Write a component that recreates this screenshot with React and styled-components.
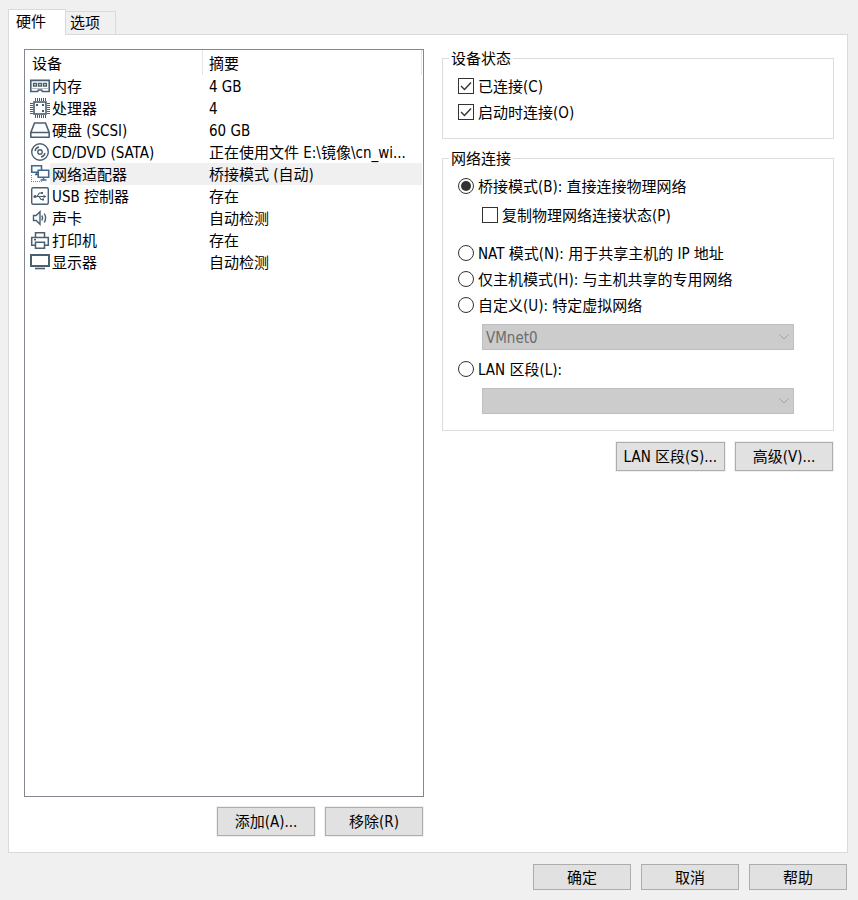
import React, { useState } from "react";
import styled, { createGlobalStyle, css } from "styled-components";

const GlobalStyle = createGlobalStyle`
  *, *::before, *::after { box-sizing: border-box; }
  body {
    margin: 0;
    background: #f0f0f0;
    color: #000;
    font: 15px/20px Tahoma, "DejaVu Sans Condensed", "Noto Sans CJK SC", sans-serif;
  }
  button, select, input { font: inherit; color: inherit; margin: 0; }
`;

const Dialog = styled.main`
  min-height: 100vh;
  display: flex;
  flex-direction: column;
  padding: 9px 10px 10px 8px;
`;

const TabList = styled.div`
  display: flex;
  align-items: flex-end;
`;

const Tab = styled.button`
  height: 23px;
  padding: 0 15px 0 4px;
  border: 1px solid #dadada;
  border-width: 1px 1px 0 0;
  background: #f0f0f0;
  ${(p) =>
    p["aria-selected"] &&
    css`
      height: 26px;
      padding: 0 19px 2px 7px;
      border-left-width: 1px;
      background: #fff;
      position: relative;
      margin-bottom: -1px;
    `}
`;

const Panel = styled.section`
  flex: 1;
  display: grid;
  grid-template-columns: minmax(0, 400fr) minmax(0, 392fr);
  gap: 18px;
  padding: 14px 13px 16px 15px;
  background: #fff;
  border: 1px solid #dadada;
`;

const Column = styled.div`
  display: flex;
  flex-direction: column;
`;

const DeviceList = styled.div`
  flex: 1;
  padding-right: 1px;
  border: 1px solid #828790;
`;

const DeviceTable = styled.table`
  width: 100%;
  table-layout: fixed;
  border-collapse: separate;
  border-spacing: 0;
`;

const HeadCell = styled.th`
  height: 25px;
  width: ${(p) => p.$width || "auto"};
  padding: 2px 0 0 ${(p) => (p.$first ? 7 : 6)}px;
  border-right: 1px solid #e5e5e5;
  font-weight: normal;
  text-align: left;
`;

const DeviceRow = styled.tr`
  height: 22px;
  --row: ${(p) => (p["aria-selected"] ? "#f0f0f0" : "#fff")};
`;

const NameCell = styled.td`
  padding: 0 0 0 5px;
`;

const DeviceName = styled.div`
  display: grid;
  grid-template-columns: 20px 1fr;
`;

const DeviceLabel = styled.span`
  padding: 2px 0 0 2px;
  background: var(--row);
`;

const SummaryCell = styled.td`
  padding: 2px 4px 0 6px;
  background: var(--row);
  overflow: hidden;
  white-space: nowrap;
  text-overflow: ellipsis;
`;

const ButtonRow = styled.div`
  display: flex;
  justify-content: flex-end;
  gap: 10px;
  margin-top: ${(p) => p.$top}px;
  padding-right: 1px;
`;

const Button = styled.button`
  min-width: 98px;
  height: 29px;
  padding: 0 7px;
  border: 1px solid #adadad;
  background: #e1e1e1;
  box-shadow: 0 0 0 1px #f0f0f0;
  white-space: nowrap;
  &:hover { border-color: #0078d7; background: #e5f1fb; }
`;

const Footer = styled(ButtonRow)`
  ${Button} { height: 26px; padding-top: 2px; }
`;

const Settings = styled(Column)`
  margin-top: -1px;
  gap: 9px;
`;

const Group = styled.fieldset`
  min-width: 0;
  margin: 0;
  padding: 5px 15px ${(p) => p.$bottom}px;
  border: 1px solid #dcdcdc;
`;

const Legend = styled.legend`
  height: 20px;
  margin-left: -9px;
  padding: 0 2px;
  line-height: 22px;
`;

const Choice = styled.label`
  display: flex;
  align-items: center;
  gap: 4px;
  height: 26px;
  margin-top: ${(p) => p.$top || 0}px;
  margin-left: ${(p) => (p.$nested ? 24 : 0)}px;
  white-space: nowrap;
`;

const ChoiceText = styled.span`
  padding-top: 2px;
`;

const Mark = styled.span`
  display: grid;
  flex: none;
  width: 16px;
  height: 16px;
  > * { grid-area: 1 / 1; }
  svg { visibility: hidden; pointer-events: none; }
  input:checked + svg { visibility: visible; }
`;

const MarkInput = styled.input`
  appearance: none;
  width: 16px;
  height: 16px;
  border: 1px solid #333;
  border-radius: ${(p) => (p.type === "radio" ? "50%" : "0")};
  background: #fff;
`;

const SelectBox = styled.div`
  display: grid;
  align-items: center;
  margin: 6px 24px 0;
  > * { grid-area: 1 / 1; }
  svg { justify-self: end; margin-right: 4px; pointer-events: none; }
`;

const Select = styled.select`
  appearance: none;
  width: 100%;
  height: 26px;
  padding: 2px 24px 0 3px;
  border: 1px solid #bfbfbf;
  border-radius: 0;
  background: #ccc;
  color: #6d6d6d;
  opacity: 1;
`;

const Glyph = styled.svg`
  display: block;
  fill: none;
  stroke: ${(p) => p.$color || "#4a6070"};
  stroke-width: 1.6;
`;

const icons = {
  memory: (
    <>
      <path d="M.8 5.500h18.400v11h-6.700l-1-1.500h-3l-1 1.500H.8z" />
      <path d="M0 4.500h20" stroke="#a4afb7" strokeWidth="1" />
      <path d="M3.500 8.500h3v2.500h-3zM8.500 8.500h3v2.500h-3zM13.500 8.500h3v2.500h-3z" strokeWidth="1.300" />
      <path d="M2 13.500h16" stroke="#b5bec5" strokeWidth="1" />
    </>
  ),
  cpu: (
    <>
      <rect x="4" y="5" width="12" height="12" />
      <path d="M5.500 1v3M7.500 1v3M9.500 1v3M11.500 1v3M13.500 1v3M15.500 1v3M5.500 18v3M7.500 18v3M9.500 18v3M11.500 18v3M13.500 18v3M15.500 18v3M0 6.500h3M0 8.500h3M0 10.500h3M0 12.500h3M0 14.500h3M0 16.500h3M17 6.500h3M17 8.500h3M17 10.500h3M17 12.500h3M17 14.500h3M17 16.500h3" strokeWidth="1" />
      <path d="M6 7h2v2H6zM12 7h2v2h-2zM12 13h2v2h-2z" fill="#4a6070" stroke="none" />
    </>
  ),
  disk: (
    <path d="M4.500 4h11l3.700 9.500v4.700H.8v-4.700zM.8 13.500h18.400" strokeLinejoin="round" />
  ),
  disc: (
    <>
      <circle cx="10" cy="11" r="8.300" strokeWidth="1.400" />
      <circle cx="10" cy="11" r="2.200" strokeWidth="1.400" />
      <path d="M5 10a5 5 0 0 1 4-4M15 12a5 5 0 0 1-4 4" strokeWidth="1.400" />
    </>
  ),
  network: (
    <>
      <path d="M1.700 2.700h9.800v6.600H1.700zM5 11.500h4M6.500 9.300v2.200" />
      <path d="M8.200 7.200h10.500v7H8.200z" fill="#fff" />
      <path d="M13.500 14v2.500M10.500 17h6" />
      <path d="M1.500 12v7M3 18.500h10" strokeDasharray="1 1" strokeWidth="1" stroke="#73869a" />
    </>
  ),
  usb: (
    <>
      <rect x="1.700" y="2.700" width="16.600" height="16.600" rx="1.500" strokeWidth="1.400" />
      <path d="M5 11.500h9.500M7 11.500l2.500-3.500h2M9 11.500l2 3h2" strokeWidth="1.200" />
      <path d="M13.500 9.700l3 1.800-3 1.800zM11 7h2v2h-2zM12 13.500h2v2h-2z" fill="#4a6070" stroke="none" />
      <circle cx="5" cy="11.500" r="1.600" fill="#4a6070" stroke="none" />
    </>
  ),
  sound: (
    <path d="M3.500 8.500h2.700L10 4.700v12.600l-3.800-3.800H3.500zM11.800 8.500q1.600 2.500 0 5M14.200 6.500q2.800 4.500 0 9" strokeWidth="1.400" />
  ),
  printer: (
    <path d="M5.500 8.500V3.700h9v4.800M5.500 16.200H1.700V8.500h16.600v7.700h-3.800M5.500 13.200h9v6.100h-9zM4 10.800h2" strokeWidth="1.500" />
  ),
  display: (
    <>
      <path d="M1 4h18v11H1z" strokeWidth="2" />
      <path d="M5 17.500h10" strokeWidth="1.600" />
    </>
  ),
};

function DeviceIcon({ name }) {
  return (
    <Glyph width="20" height="22" viewBox="0 0 20 22" aria-hidden="true" $color={name === "network" ? "#40698f" : undefined}>
      {icons[name]}
    </Glyph>
  );
}

const devices = [
  ["memory", "内存", "4 GB"],
  ["cpu", "处理器", "4"],
  ["disk", "硬盘 (SCSI)", "60 GB"],
  ["disc", "CD/DVD (SATA)", "正在使用文件 E:\\镜像\\cn_wi..."],
  ["network", "网络适配器", "桥接模式 (自动)"],
  ["usb", "USB 控制器", "存在"],
  ["sound", "声卡", "自动检测"],
  ["printer", "打印机", "存在"],
  ["display", "显示器", "自动检测"],
];

function Check({ children, top, nested, checked }) {
  return (
    <Choice $top={top} $nested={nested}>
      <Mark>
        <MarkInput type="checkbox" defaultChecked={checked} />
        <Glyph width="16" height="16" viewBox="0 0 16 16" $color="#333">
          <path d="M3 8l3.500 3.500L13 4.500" strokeWidth="1.400" />
        </Glyph>
      </Mark>
      <ChoiceText>{children}</ChoiceText>
    </Choice>
  );
}

function Radio({ children, top, checked }) {
  return (
    <Choice $top={top}>
      <Mark>
        <MarkInput type="radio" name="connection" defaultChecked={checked} />
        <Glyph width="16" height="16" viewBox="0 0 16 16">
          <circle cx="8" cy="8" r="5" fill="#333" stroke="none" />
        </Glyph>
      </Mark>
      <ChoiceText>{children}</ChoiceText>
    </Choice>
  );
}

function DropDown({ label, value }) {
  return (
    <SelectBox>
      <Select disabled aria-label={label}>
        <option>{value}</option>
      </Select>
      <Glyph width="12" height="8" viewBox="0 0 12 8" $color="#a0a0a0">
        <path d="M1.500 1.500L6 6l4.500-4.500" strokeWidth="1" />
      </Glyph>
    </SelectBox>
  );
}

export default function App() {
  const [selected, setSelected] = useState("network");
  return (
    <Dialog>
      <GlobalStyle />
      <TabList role="tablist">
        <Tab role="tab" aria-selected={true}>硬件</Tab>
        <Tab role="tab">选项</Tab>
      </TabList>
      <Panel role="tabpanel">
        <Column>
          <DeviceList>
            <DeviceTable>
              <thead>
                <tr>
                  <HeadCell $first $width="178px">设备</HeadCell>
                  <HeadCell>摘要</HeadCell>
                </tr>
              </thead>
              <tbody>
                {devices.map(([icon, name, summary]) => (
                  <DeviceRow key={icon} aria-selected={icon === selected} onClick={() => setSelected(icon)}>
                    <NameCell>
                      <DeviceName>
                        <DeviceIcon name={icon} />
                        <DeviceLabel>{name}</DeviceLabel>
                      </DeviceName>
                    </NameCell>
                    <SummaryCell>{summary}</SummaryCell>
                  </DeviceRow>
                ))}
              </tbody>
            </DeviceTable>
          </DeviceList>
          <ButtonRow $top={10}>
            <Button>添加(A)...</Button>
            <Button>移除(R)</Button>
          </ButtonRow>
        </Column>
        <Settings>
          <Group $bottom={13}>
            <Legend>设备状态</Legend>
            <Check checked>已连接(C)</Check>
            <Check checked>启动时连接(O)</Check>
          </Group>
          <Group $bottom={16}>
            <Legend>网络连接</Legend>
            <Radio checked>桥接模式(B): 直接连接物理网络</Radio>
            <Check nested top={3}>复制物理网络连接状态(P)</Check>
            <Radio top={12}>NAT 模式(N): 用于共享主机的 IP 地址</Radio>
            <Radio>仅主机模式(H): 与主机共享的专用网络</Radio>
            <Radio>自定义(U): 特定虚拟网络</Radio>
            <DropDown label="特定虚拟网络" value="VMnet0" />
            <Radio top={6}>LAN 区段(L):</Radio>
            <DropDown label="LAN 区段" value="" />
          </Group>
          <ButtonRow $top={2}>
            <Button>LAN 区段(S)...</Button>
            <Button>高级(V)...</Button>
          </ButtonRow>
        </Settings>
      </Panel>
      <Footer $top={11}>
        <Button>确定</Button>
        <Button>取消</Button>
        <Button>帮助</Button>
      </Footer>
    </Dialog>
  );
}
